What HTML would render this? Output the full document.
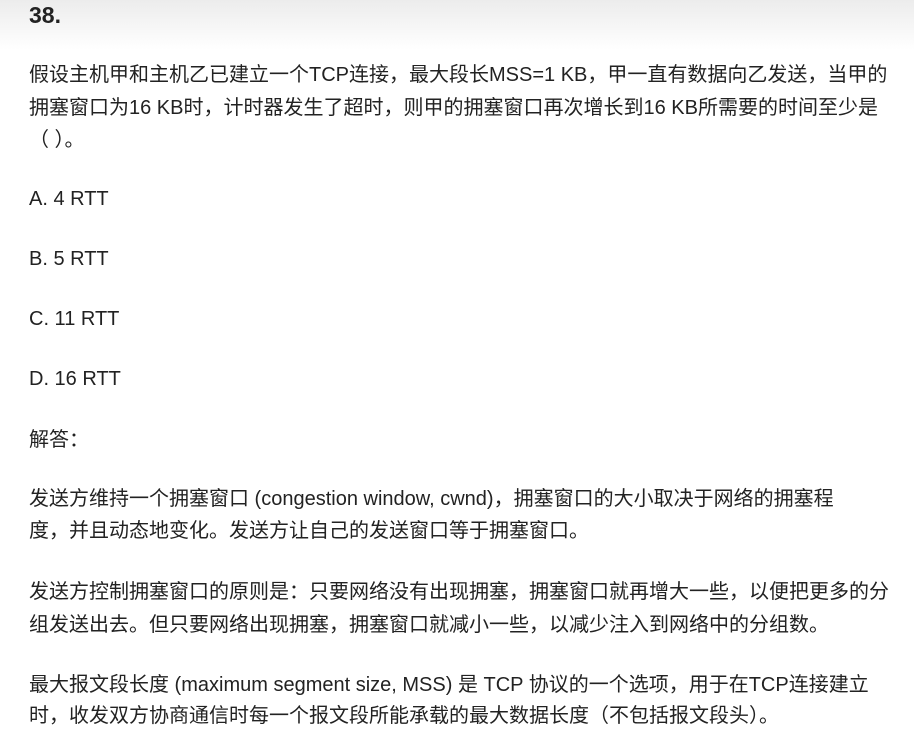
<!DOCTYPE html>
<html><head><meta charset="utf-8"><style>
html,body{margin:0;padding:0;}
body{width:914px;height:737px;overflow:hidden;position:relative;background:#fff;
font-family:"Liberation Sans","Noto Sans CJK SC",sans-serif;color:#222;font-size:20px;}
.top{position:absolute;left:0;top:0;width:914px;height:50px;background:linear-gradient(#ececec,#fff);}
.t{position:absolute;left:29px;white-space:nowrap;line-height:24px;}
.h{font-weight:bold;font-size:23px;top:3px;}
</style></head><body>
<div class="top"></div>
<div class="t h">38.</div>
<div class="t" style="top:63px">假设主机甲和主机乙已建立一个TCP连接，最大段长MSS=1 KB，甲一直有数据向乙发送，当甲的</div>
<div class="t" style="top:96px">拥塞窗口为16 KB时，计时器发生了超时，则甲的拥塞窗口再次增长到16 KB所需要的时间至少是</div>
<div class="t" style="top:128px">（ ）。</div>
<div class="t" style="top:187px">A. 4 RTT</div>
<div class="t" style="top:247px">B. 5 RTT</div>
<div class="t" style="top:307px">C. 11 RTT</div>
<div class="t" style="top:367px">D. 16 RTT</div>
<div class="t" style="top:428px">解答：</div>
<div class="t" style="top:487px">发送方维持一个拥塞窗口 (congestion window, cwnd)，拥塞窗口的大小取决于网络的拥塞程</div>
<div class="t" style="top:519px">度，并且动态地变化。发送方让自己的发送窗口等于拥塞窗口。</div>
<div class="t" style="top:580px">发送方控制拥塞窗口的原则是：只要网络没有出现拥塞，拥塞窗口就再增大一些，以便把更多的分</div>
<div class="t" style="top:613px">组发送出去。但只要网络出现拥塞，拥塞窗口就减小一些，以减少注入到网络中的分组数。</div>
<div class="t" style="top:673px">最大报文段长度 (maximum segment size, MSS) 是 TCP 协议的一个选项，用于在TCP连接建立</div>
<div class="t" style="top:704px">时，收发双方协商通信时每一个报文段所能承载的最大数据长度（不包括报文段头）。</div>
</body></html>
